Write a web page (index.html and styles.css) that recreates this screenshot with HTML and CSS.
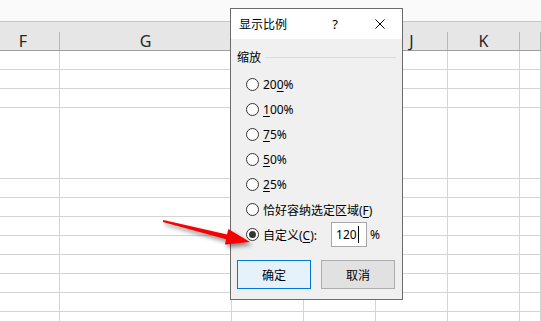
FILE: index.html
```html
<!DOCTYPE html>
<html lang="zh-CN">
<head>
    <meta charset="UTF-8">
    <meta name="viewport" content="width=device-width, initial-scale=1.0">
    <title>显示比例</title>
    <link rel="stylesheet" href="styles.css">
</head>
<body>
    <div class="topbar"></div>
    <div class="colheads">
        <div class="colhead">F</div>
        <div class="colhead">G</div>
        <div class="colhead"></div>
        <div class="colhead"></div>
        <div class="colhead">J</div>
        <div class="colhead">K</div>
        <div class="colhead"></div>
    </div>
    <div class="sheet">
        <div></div><div></div><div></div><div></div><div></div><div></div><div></div>
        <div></div><div></div><div></div><div></div><div></div><div></div><div></div>
        <div></div><div></div><div></div><div></div><div></div><div></div><div></div>
        <div></div><div></div><div></div><div></div><div></div><div></div><div></div>
        <div></div><div></div><div></div><div></div><div></div><div></div><div></div>
        <div></div><div></div><div></div><div></div><div></div><div></div><div></div>
        <div></div><div></div><div></div><div></div><div></div><div></div><div></div>
        <div></div><div></div><div></div><div></div><div></div><div></div><div></div>
        <div></div><div></div><div></div><div></div><div></div><div></div><div></div>
        <div></div><div></div><div></div><div></div><div></div><div></div><div></div>
        <div></div><div></div><div></div><div></div><div></div><div></div><div></div>
        <div></div><div></div><div></div><div></div><div></div><div></div><div></div>
    </div>

    <div class="dialog">
        <div class="titlebar">
            <span class="title">显示比例</span>
            <span class="help">?</span>
            <svg class="close" width="10" height="10" viewBox="0 0 10 10">
                <path d="M0.5 0.5 L9.5 9.5 M9.5 0.5 L0.5 9.5" stroke="#000" stroke-width="1" fill="none"/>
            </svg>
        </div>
        <div class="body">
            <div class="group-label">
                <span>缩放</span>
                <span class="group-line"></span>
            </div>
            <div class="options">
                <div class="option"><span class="radio"></span><span>20<u>0</u>%</span></div>
                <div class="option"><span class="radio"></span><span><u>1</u>00%</span></div>
                <div class="option"><span class="radio"></span><span><u>7</u>5%</span></div>
                <div class="option"><span class="radio"></span><span><u>5</u>0%</span></div>
                <div class="option"><span class="radio"></span><span><u>2</u>5%</span></div>
                <div class="option"><span class="radio"></span><span>恰好容纳选定区域(<u>F</u>)</span></div>
                <div class="option">
                    <span class="radio checked"></span><span>自定义(<u>C</u>):</span>
                    <div class="zoom-input">120<span class="caret"></span></div>
                    <span class="percent">%</span>
                </div>
            </div>
            <div class="actions">
                <button class="btn btn-primary">确定</button>
                <button class="btn">取消</button>
            </div>
        </div>
    </div>

    <!-- red annotation arrow -->
    <svg class="arrow" width="541" height="321" viewBox="0 0 541 321">
        <polygon points="163.2,220 227.1,234.4 228.3,229 250,242 224.9,244.6 226.1,239.2 162.8,222" fill="#f80000"/>
    </svg>
</body>
</html>
```

FILE: styles.css
```css
* { box-sizing: border-box; }
body { margin: 0; width: 541px; height: 321px; overflow: hidden; position: relative; background: #fff; font-family: "Noto Sans", "Noto Sans CJK SC", sans-serif; color: #000; }

.topbar { height: 22px; background: #fafafa; border-bottom: 1px solid #c6c6c6; }
.colheads { display: grid; grid-template-columns: 73px 172px 72px 72px 72px 72px 1fr; align-items: end; height: 29px; width: 554px; margin-left: -13px; background: #e6e6e6; border-bottom: 1px solid #9e9e9e; }
.colhead { height: 18px; line-height: 18px; text-align: center; font-size: 16px; color: #262626; border-right: 1px solid #b8b8b8; }

.sheet { display: grid; grid-template-columns: 73px 172px 72px 72px 72px 72px 1fr; grid-template-rows: 19px 19px 19px 71px repeat(8, 19px); width: 554px; margin-left: -13px; }
.sheet div { border-right: 1px solid #d4d4d4; border-bottom: 1px solid #d4d4d4; }

.dialog { position: absolute; left: 230px; top: 8px; width: 173px; height: 292px; border: 1px solid #6b6b6b; background: #f0f0f0; display: flex; flex-direction: column; font-size: 12px; }
.titlebar { height: 30px; background: #fff; display: flex; align-items: center; padding: 0 17px 0 8px; }
.title { flex: 1; }
.help { width: 12px; text-align: center; font-size: 13px; }
.close { margin-left: 34px; }

.body { flex: 1; padding: 10px 6px 0 6px; }
.group-label { display: flex; align-items: center; gap: 4px; height: 16px; }
.group-line { flex: 1; height: 1px; background: #dcdcdc; }

.options { margin-top: 7px; padding-left: 9px; }
.option { height: 25px; display: flex; align-items: center; gap: 4px; }
.option u { text-underline-offset: 2px; }
.radio { width: 13px; height: 13px; border: 1px solid #333; border-radius: 50%; background: #fff; display: flex; align-items: center; justify-content: center; }
.radio.checked::after { content: ""; width: 7px; height: 7px; border-radius: 50%; background: #333; }
.zoom-input { width: 36px; height: 25px; margin-left: 10px; border: 1px solid #a8a8a8; background: #fff; display: flex; align-items: center; padding-left: 4px; }
.caret { width: 1px; height: 17px; background: #000; margin-left: 1px; }
.percent { margin-left: -1px; }

.actions { margin-top: 13px; display: flex; gap: 10px; }
.btn { width: 74px; height: 29px; font-family: inherit; font-size: 12px; color: #000; background: #e1e1e1; border: 1px solid #adadad; padding: 0; }
.btn-primary { background: #e5f1fb; border-color: #0078d7; }

.arrow { position: absolute; left: 0; top: 0; pointer-events: none; filter: drop-shadow(2px 3px 2px rgba(0, 0, 0, 0.45)); }
```
